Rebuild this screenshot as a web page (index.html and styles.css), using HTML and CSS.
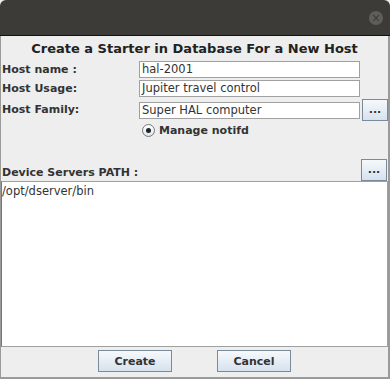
FILE: index.html
```html
<!DOCTYPE html>
<html lang="en">
<head>
    <meta charset="UTF-8">
    <meta name="viewport" content="width=device-width, initial-scale=1.0">
    <title>Create a Starter</title>
    <link rel="stylesheet" href="styles.css">
</head>
<body>
    <div class="window">
        <div class="titlebar">
            <span class="close">&times;</span>
        </div>
        <div class="dialog">
            <h1>Create a Starter in Database For a New Host</h1>

            <div class="host-form">
                <label class="lbl">Host name :</label>
                <div class="field">hal-2001</div>
                <div></div>

                <label class="lbl">Host Usage:</label>
                <div class="field">Jupiter travel control</div>
                <div></div>

                <label class="lbl row3">Host Family:</label>
                <div class="field row3">Super HAL computer</div>
                <button class="dots">...</button>
            </div>

            <div class="radio-row">
                <span class="radio"><span class="dot"></span></span>
                <span class="radio-label">Manage notifd</span>
            </div>

            <div class="path-head">
                <span class="lbl">Device Servers PATH :</span>
                <button class="dots">...</button>
            </div>
            <div class="path-area">/opt/dserver/bin</div>

            <div class="footer">
                <button class="btn">Create</button>
                <button class="btn">Cancel</button>
            </div>
        </div>
    </div>
</body>
</html>
```

FILE: styles.css
```css
/* dialog window */
body {
    margin: 0;
    font-family: "DejaVu Sans", Verdana, sans-serif;
    font-size: 11px;
    color: #333;
    background-color: #eeeeee;
}

.window {
    width: 390px;
    height: 379px;
    display: flex;
    flex-direction: column;
}

.titlebar {
    height: 35px;
    background-color: #3c3b37;
    border-bottom: 1px solid #111;
    border-radius: 6px 6px 0 0;
    display: flex;
    justify-content: flex-end;
    align-items: center;
    padding-right: 7px;
}

.close {
    width: 14px;
    height: 14px;
    border-radius: 50%;
    background-color: #5f5e5a;
    color: #3c3b37;
    font-size: 12px;
    line-height: 14px;
    text-align: center;
}

.dialog {
    flex: 1;
    background-color: #eeeeee;
    border-left: 1px solid #9a9a9a;
    border-right: 2px solid #9a9a9a;
    border-bottom: 2px solid #9a9a9a;
    display: flex;
    flex-direction: column;
}

h1 {
    margin: 3px 0 0;
    height: 20px;
    font-size: 13px;
    line-height: 20px;
    font-weight: bold;
    text-align: center;
    color: #222;
}

.host-form {
    display: grid;
    grid-template-columns: 135px 221px 26px;
    grid-template-rows: 17px 17px 22px;
    row-gap: 2px;
    column-gap: 2px;
    margin-top: 2px;
    padding-left: 1px;
}

.lbl {
    font-weight: bold;
    color: #333;
    align-self: center;
}

.field {
    background-color: #fff;
    border: 1px solid #a0a0a0;
    padding: 0 2px;
    font-size: 11.5px;
    line-height: 15px;
    color: #333;
}

.row3 {
    align-self: center;
    height: 15px;
}

.dots {
    width: 26px;
    height: 22px;
    padding: 0;
    border: 1px solid #7a8a99;
    background: linear-gradient(#f6f9fc, #d6e2ee);
    font-family: "DejaVu Sans", sans-serif;
    font-weight: bold;
    font-size: 11px;
    color: #333;
    line-height: 14px;
}

.radio-row {
    display: flex;
    align-items: center;
    gap: 4px;
    margin: 0 0 0 139px;
    height: 18px;
}

.radio {
    width: 11px;
    height: 11px;
    border: 1px solid #777;
    border-radius: 50%;
    background: linear-gradient(#fff, #dde6ee);
    display: flex;
    align-items: center;
    justify-content: center;
    margin-left: 2px;
}

.dot {
    width: 5px;
    height: 5px;
    border-radius: 50%;
    background-color: #222;
}

.radio-label {
    font-weight: bold;
    color: #333;
}

.path-head {
    display: flex;
    justify-content: space-between;
    align-items: center;
    margin-top: 20px;
    padding: 0 1px 0 1px;
}

.path-head .lbl {
    padding-top: 5px;
}

.path-area {
    height: 162px;
    background-color: #fff;
    border: 1px solid #a0a0a0;
    border-left-color: #777;
    padding: 2px 0 0 0;
    font-size: 11.5px;
    line-height: 15px;
    color: #333;
}

.footer {
    display: flex;
    justify-content: center;
    gap: 45px;
    padding-top: 3px;
}

.btn {
    width: 74px;
    height: 22px;
    padding: 0;
    border: 1px solid #7a8a99;
    background: linear-gradient(#f6f9fc, #d6e2ee);
    font-family: "DejaVu Sans", sans-serif;
    font-weight: bold;
    font-size: 11px;
    color: #333;
}
```
